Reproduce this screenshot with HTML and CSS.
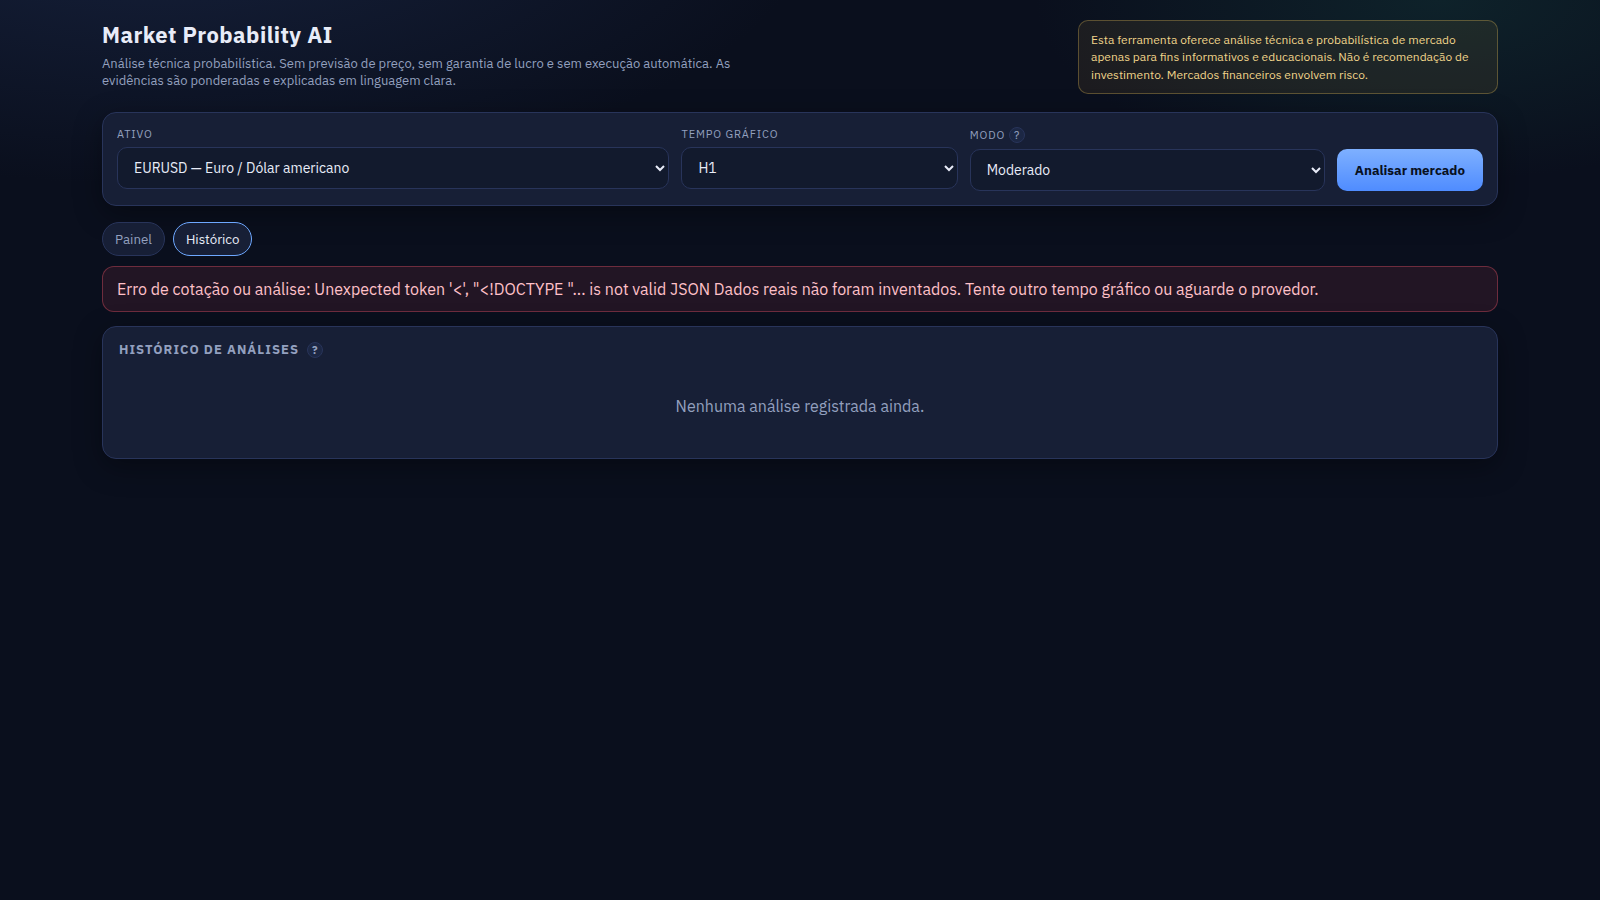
FILE: index.html
```html
<!DOCTYPE html>
<html lang="pt-BR">
<head>
  <meta charset="utf-8">
  <meta name="viewport" content="width=device-width, initial-scale=1">
  <title>Market Probability AI</title>
  <link rel="stylesheet" href="styles.css">
</head>
<body>
  <div class="app">
    <header class="top">
      <div class="brand">
        <h1>Market Probability AI</h1>
        <p>Análise técnica probabilística. Sem previsão de preço, sem garantia de lucro e sem execução automática. As evidências são ponderadas e explicadas em linguagem clara.</p>
      </div>
      <div class="disclaimer">Esta ferramenta oferece análise técnica e probabilística de mercado apenas para fins informativos e educacionais. Não é recomendação de investimento. Mercados financeiros envolvem risco.</div>
    </header>
    <main>
      <form class="toolbar">
        <div class="field">
          <label for="asset">Ativo</label>
          <select id="asset"><option>EURUSD — Euro / Dólar americano</option></select>
        </div>
        <div class="field">
          <label for="timeframe">Tempo gráfico</label>
          <select id="timeframe"><option>H1</option></select>
        </div>
        <div class="field">
          <div class="label-row"><label for="mode">Modo</label><button class="help" type="button" aria-label="Ajuda: modo">?</button></div>
          <select id="mode"><option>Moderado</option></select>
        </div>
        <button class="primary" type="button">Analisar mercado</button>
      </form>
      <nav class="tabs">
        <button class="tab" type="button">Painel</button>
        <button class="tab active" type="button">Histórico</button>
      </nav>
      <div class="error" role="alert">Erro de cotação ou análise: Unexpected token '&lt;', "&lt;!DOCTYPE "... is not valid JSON Dados reais não foram inventados. Tente outro tempo gráfico ou aguarde o provedor.</div>
      <section class="card">
        <h2>Histórico de análises <button class="help" type="button" aria-label="Ajuda: histórico">?</button></h2>
        <p class="empty">Nenhuma análise registrada ainda.</p>
      </section>
    </main>
  </div>
</body>
</html>
```
FILE: styles.css
```css
:root {
  color-scheme: dark;
  --bg: #0a0f1d;
  --panel: #171f36;
  --field: #121a2d;
  --line: #28345a;
  --text: #e8ecf8;
  --muted: #93a0bf;
  --accent: #6ea8ff;
}

* { box-sizing: border-box; }

body {
  margin: 0;
  min-height: 100vh;
  color: var(--text);
  font: 16px/24px "IBM Plex Sans", Roboto, "Noto Sans", sans-serif;
  background:
    radial-gradient(1200px 500px at 10% -10%, #16213c 0%, transparent 55%),
    radial-gradient(900px 400px at 90% 0%, #0e222a 0%, transparent 45%),
    var(--bg);
}

button, select { font-family: inherit; }

.app {
  max-width: 1440px;
  margin: 0 auto;
  padding: 20px 22px 40px;
}

.top {
  display: flex;
  justify-content: space-between;
  align-items: flex-start;
  gap: 20px;
  margin-bottom: 18px;
}

.brand { max-width: 640px; }

h1 {
  margin: 0 0 6px;
  font-size: 22px;
  line-height: 29px;
  font-weight: 700;
  letter-spacing: 0.02em;
}

.brand p {
  margin: 0;
  color: var(--muted);
  font-size: 13px;
  line-height: 17px;
}

.disclaimer {
  max-width: 420px;
  padding: 10px 12px;
  border: 1px solid rgba(240, 200, 90, 0.3);
  border-radius: 10px;
  background: rgba(240, 180, 60, 0.08);
  color: #f0d48a;
  font-size: 12px;
  line-height: 1.45;
}

.toolbar {
  display: grid;
  grid-template-columns: 1.4fr 0.7fr 0.9fr auto;
  gap: 12px;
  padding: 14px;
  border: 1px solid var(--line);
  border-radius: 14px;
  background: var(--panel);
  box-shadow: 0 8px 28px rgba(0, 0, 0, 0.35);
}

.field {
  display: flex;
  flex-direction: column;
  gap: 6px;
}

.field label {
  color: var(--muted);
  font-size: 11px;
  line-height: 14px;
  letter-spacing: 0.08em;
  text-transform: uppercase;
}

.label-row {
  display: flex;
  align-items: center;
  gap: 4px;
}

select {
  width: 100%;
  height: 42px;
  padding: 0 0 0 12px;
  border: 1px solid var(--line);
  border-radius: 10px;
  background: var(--field);
  color: var(--text);
  font-size: 14px;
}

.help {
  display: inline-flex;
  align-items: center;
  justify-content: center;
  width: 16px;
  height: 16px;
  padding: 0;
  border: 1px solid var(--line);
  border-radius: 50%;
  background: #1c2744;
  color: var(--muted);
  font-size: 11px;
  line-height: 14px;
  font-weight: inherit;
  letter-spacing: 0.08em;
}

.primary {
  align-self: end;
  height: 42px;
  padding: 0 18px;
  border: 0;
  border-radius: 10px;
  background: linear-gradient(180deg, #7eb0ff, #4f8cff);
  color: #081022;
  font-weight: 700;
}

.tabs {
  display: flex;
  gap: 8px;
  margin: 16px 0 10px;
}

.tab {
  height: 34px;
  padding: 0 12px;
  border: 1px solid var(--line);
  border-radius: 17px;
  background: var(--panel);
  color: var(--muted);
}

.tab.active {
  border-color: var(--accent);
  color: var(--text);
}

.error {
  margin-bottom: 14px;
  padding: 10px 14px;
  border: 1px solid rgba(255, 90, 110, 0.35);
  border-radius: 12px;
  background: rgba(255, 80, 100, 0.1);
  color: #ffc0c8;
}

.card {
  padding: 14px 16px;
  border: 1px solid var(--line);
  border-radius: 14px;
  background: var(--panel);
  box-shadow: 0 8px 28px rgba(0, 0, 0, 0.35);
}

h2 {
  display: flex;
  align-items: center;
  gap: 8px;
  margin: 0 0 10px;
  color: var(--muted);
  font-size: 13px;
  line-height: 17px;
  font-weight: 700;
  letter-spacing: 0.08em;
  text-transform: uppercase;
}

.empty {
  margin: 0;
  padding: 26px;
  color: var(--muted);
  text-align: center;
}
```
